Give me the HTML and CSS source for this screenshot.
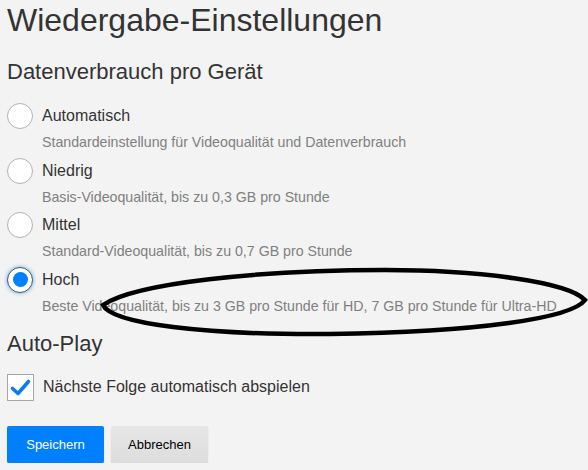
FILE: index.html
```html
<!DOCTYPE html>
<html lang="de">
<head>
    <meta charset="UTF-8">
    <title>Wiedergabe-Einstellungen</title>
    <link rel="stylesheet" href="styles.css">
</head>
<body>

<div class="settings">
    <h1 class="page-title">Wiedergabe-Einstellungen</h1>

    <h2 class="section-title">Datenverbrauch pro Gerät</h2>

    <div class="option">
        <span class="radio"></span>
        <div class="option-text">
            <div class="option-label">Automatisch</div>
            <div class="option-desc">Standardeinstellung für Videoqualität und Datenverbrauch</div>
        </div>
    </div>

    <div class="option">
        <span class="radio"></span>
        <div class="option-text">
            <div class="option-label">Niedrig</div>
            <div class="option-desc">Basis-Videoqualität, bis zu 0,3 GB pro Stunde</div>
        </div>
    </div>

    <div class="option">
        <span class="radio"></span>
        <div class="option-text">
            <div class="option-label">Mittel</div>
            <div class="option-desc">Standard-Videoqualität, bis zu 0,7 GB pro Stunde</div>
        </div>
    </div>

    <div class="option">
        <span class="radio checked"></span>
        <div class="option-text">
            <div class="option-label">Hoch</div>
            <div class="option-desc">Beste Videoqualität, bis zu 3 GB pro Stunde für HD, 7 GB pro Stunde für Ultra-HD</div>
        </div>
    </div>

    <h2 class="section-title autoplay">Auto-Play</h2>

    <div class="check-row">
        <span class="checkbox">
            <svg width="25" height="25" viewBox="0 0 25 25">
                <path d="M4.5 13.5 L10 18.5 L20.5 6.5" fill="none" stroke="#0a7cf0" stroke-width="3.6" stroke-linecap="round" stroke-linejoin="round"/>
            </svg>
        </span>
        <span class="check-label">Nächste Folge automatisch abspielen</span>
    </div>

    <div class="actions">
        <button class="btn btn-save">Speichern</button>
        <button class="btn btn-cancel">Abbrechen</button>
    </div>
</div>

<!-- hand drawn marker around the "Hoch" description -->
<svg class="marker" width="588" height="470" viewBox="0 0 588 470">
    <path d="M103 305 C135 283 260 270 385 270 C480 270 568 282 585 300 C572 318 480 332 330 334 C205 335 112 324 103 305 Z"
          fill="none" stroke="#000" stroke-width="4.5"/>
</svg>

</body>
</html>
```

FILE: styles.css
```css
:root { --text: #333; --muted: #808080; --blue: #0080ff; --bg: #f3f3f3; }

body { background: var(--bg); color: var(--text); font-family: 'Liberation Sans', Arial, sans-serif; margin: 0; overflow: hidden; }

.settings { padding: 0 7px; }

/* --- Headings --- */
.page-title { font-size: 32px; font-weight: normal; line-height: 37px; margin: 2px 0 0; }
.section-title { font-size: 22px; font-weight: normal; line-height: 26px; margin: 20px 0 0; }
.section-title.autoplay { margin-top: 15px; }

/* --- Radio options --- */
.option { display: flex; gap: 9px; margin-top: 5.5px; }
.section-title + .option { margin-top: 18px; }

.radio { width: 24px; height: 24px; border: 1px solid #b3b3b3; border-radius: 50%; background: #fff; flex: none; display: flex; align-items: center; justify-content: center; }
.radio.checked { border-color: #555; box-shadow: 0 0 4px rgba(0,128,255,0.6); }
.radio.checked::after { content: ""; width: 15px; height: 15px; border-radius: 50%; background: var(--blue); }

.option-label { font-size: 16px; line-height: 26px; }
.option-desc { font-size: 14.2px; line-height: 20px; color: var(--muted); margin-top: 3px; }

/* --- Checkbox --- */
.check-row { display: flex; align-items: center; gap: 9px; margin-top: 16.5px; }
.checkbox { width: 25px; height: 25px; border: 1px solid #a6a6a6; background: #fff; flex: none; }
.checkbox svg { display: block; }
.check-label { font-size: 16px; line-height: 28px; }

/* --- Buttons --- */
.actions { display: flex; gap: 7px; margin-top: 24.5px; }
.btn { width: 97px; height: 37px; border: none; border-radius: 2px; font-family: inherit; font-size: 13px; cursor: pointer; box-shadow: 0 1px 1px rgba(0,0,0,0.25); }
.btn-save { background: var(--blue); color: #fff; }
.btn-cancel { background: linear-gradient(#e6e6e6, #dddddd); color: #000; }

/* --- Annotation --- */
.marker { position: absolute; top: 0; left: 0; pointer-events: none; }
```
